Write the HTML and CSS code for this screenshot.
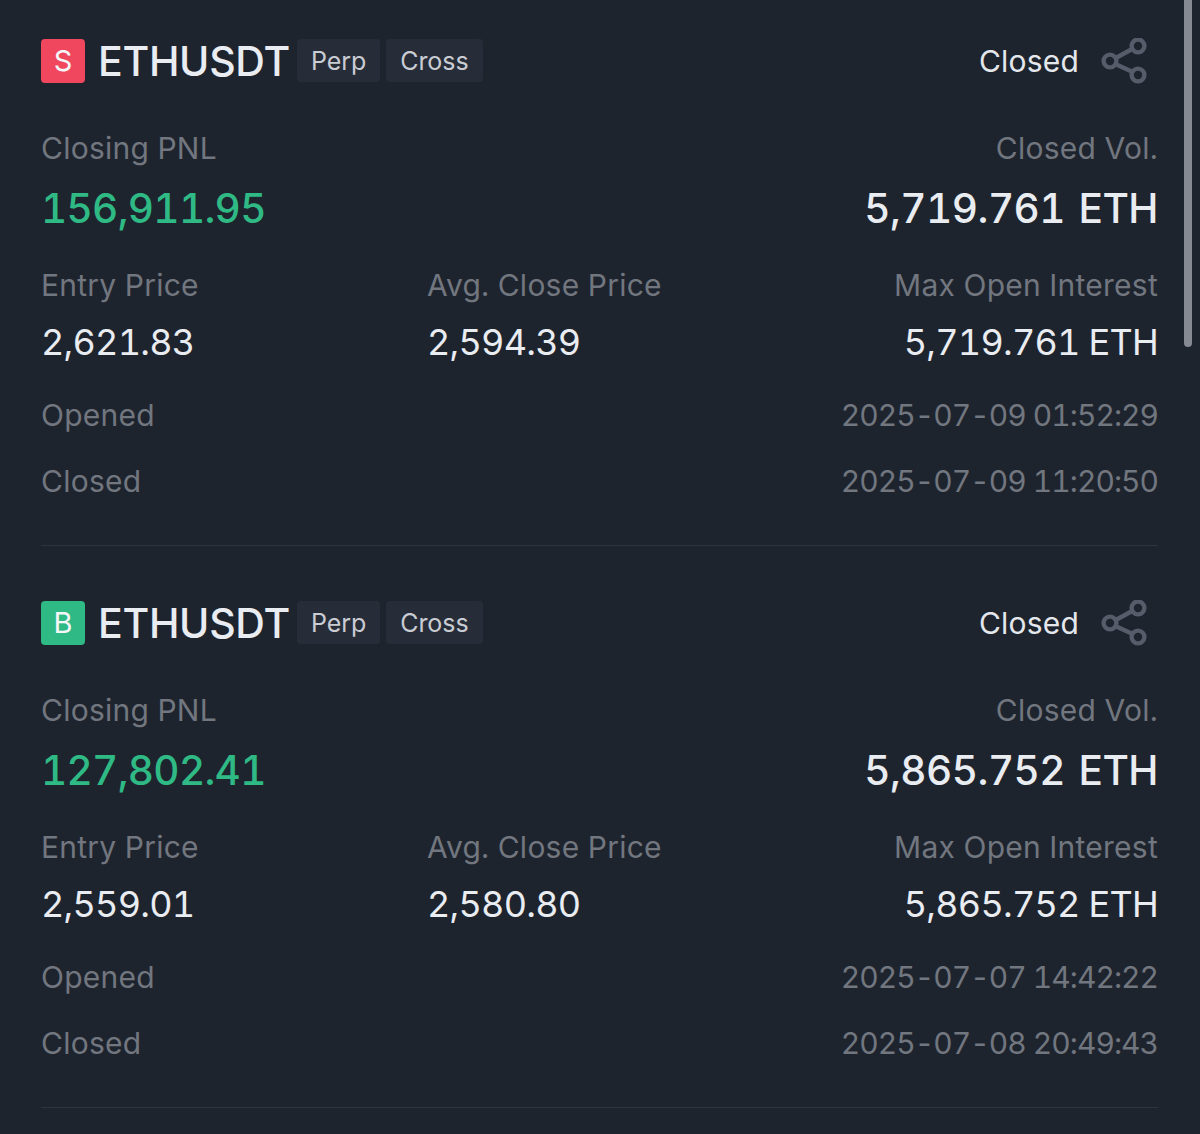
FILE: index.html
```html
<!DOCTYPE html>
<html lang="en">
<head>
<meta charset="utf-8">
<title>Closed positions</title>
<link rel="stylesheet" href="styles.css">
</head>
<body>
<div class="scroll-thumb"></div>
<main class="list">
  <section class="trade">
    <header class="head">
      <span class="side sell">S</span>
      <span class="symbol">ETHUSDT</span>
      <span class="tag">Perp</span>
      <span class="tag">Cross</span>
      <span class="status">Closed</span>
      <svg class="share" viewBox="0 0 46 46" fill="none" stroke="#565c69" stroke-width="4.4"><circle cx="9" cy="23" r="6.4"/><circle cx="37" cy="8" r="6.4"/><circle cx="37" cy="37" r="6.4"/><path d="M14.8 20 31.2 11M14.8 26.2 31.2 33.8"/></svg>
    </header>
    <div class="pair big">
      <div class="col"><div class="label">Closing PNL</div><div class="hero green">156,911.95</div></div>
      <div class="col end"><div class="label">Closed Vol.</div><div class="hero">5,719.761 ETH</div></div>
    </div>
    <div class="triple">
      <div class="col"><div class="label">Entry Price</div><div class="value">2,621.83</div></div>
      <div class="col"><div class="label">Avg. Close Price</div><div class="value">2,594.39</div></div>
      <div class="col end"><div class="label">Max Open Interest</div><div class="value">5,719.761 ETH</div></div>
    </div>
    <div class="line first"><span>Opened</span><span class="date">2025-07-09 01:52:29</span></div>
    <div class="line"><span>Closed</span><span class="date">2025-07-09 11:20:50</span></div>
  </section>
  <section class="trade">
    <header class="head">
      <span class="side buy">B</span>
      <span class="symbol">ETHUSDT</span>
      <span class="tag">Perp</span>
      <span class="tag">Cross</span>
      <span class="status">Closed</span>
      <svg class="share" viewBox="0 0 46 46" fill="none" stroke="#565c69" stroke-width="4.4"><circle cx="9" cy="23" r="6.4"/><circle cx="37" cy="8" r="6.4"/><circle cx="37" cy="37" r="6.4"/><path d="M14.8 20 31.2 11M14.8 26.2 31.2 33.8"/></svg>
    </header>
    <div class="pair big">
      <div class="col"><div class="label">Closing PNL</div><div class="hero green">127,802.41</div></div>
      <div class="col end"><div class="label">Closed Vol.</div><div class="hero">5,865.752 ETH</div></div>
    </div>
    <div class="triple">
      <div class="col"><div class="label">Entry Price</div><div class="value">2,559.01</div></div>
      <div class="col"><div class="label">Avg. Close Price</div><div class="value">2,580.80</div></div>
      <div class="col end"><div class="label">Max Open Interest</div><div class="value">5,865.752 ETH</div></div>
    </div>
    <div class="line first"><span>Opened</span><span class="date">2025-07-07 14:42:22</span></div>
    <div class="line"><span>Closed</span><span class="date">2025-07-08 20:49:43</span></div>
  </section>
</main>
</body>
</html>
```
FILE: styles.css
```css
* { box-sizing: border-box; }
html, body { margin: 0; height: 100%; overflow: hidden; }
body {
  background: #1e242e;
  font-family: "Inter", "Liberation Sans", sans-serif;
  font-variant-numeric: tabular-nums;
  color: #e9ecf1;
  position: relative;
}
.scroll-thumb {
  position: absolute;
  top: 0; left: 1184px;
  width: 8px; height: 347px;
  background: #868a93;
  border-radius: 0 0 4px 4px;
}
.list { padding: 39px 42px 0 41px; }
.trade {
  height: 507px;
  border-bottom: 1px solid #2e343e;
  margin-bottom: 55px;
}
.head { display: flex; align-items: center; height: 44px; line-height: 42px; }
.side {
  width: 44px; height: 44px;
  border-radius: 4px;
  display: flex; align-items: center; justify-content: center;
  font-size: 29px; color: #f5f6f8;
}
.sell { background: #f0475f; }
.buy { background: #2fb985; }
.symbol { font-size: 41px; margin-left: 13px; margin-right: 7px; font-weight: 500; letter-spacing: -0.3px; }
.tag {
  height: 43px; padding: 0 14px; margin-right: 6px;
  align-self: flex-start;
  background: #272d38; border-radius: 4px;
  display: flex; align-items: center;
  font-size: 25px; letter-spacing: -0.05px; color: #c9ccd3;
}
.status { margin-left: auto; font-size: 30px; letter-spacing: 0.2px; color: #e4e7ec; }
.share { width: 46px; height: 46px; margin-left: 22px; margin-right: 11px; }
.pair { display: flex; justify-content: space-between; margin-top: 46px; }
.triple { display: grid; grid-template-columns: 386px 1fr 1fr; margin-top: 32px; }
.col { display: flex; flex-direction: column; }
.end { align-items: flex-end; }
.label { font-size: 30px; letter-spacing: 0.25px; line-height: 38px; color: #71767f; }
.hero { font-size: 40.5px; letter-spacing: -0.5px; word-spacing: 3px; line-height: 50px; margin-top: 17px; font-weight: 500; color: #e9ecf1; }
.hero.green { color: #2fb985; letter-spacing: -0.7px; }
.value { font-size: 36px; letter-spacing: -0.75px; line-height: 44px; margin-top: 16px; color: #e9ecf1; }
.line {
  display: flex; justify-content: space-between;
  font-size: 30px; letter-spacing: 0.25px; line-height: 38px; color: #71767f;
  margin-top: 28px;
}
.line.first { margin-top: 32px; }
.date { letter-spacing: -0.95px; }
```
